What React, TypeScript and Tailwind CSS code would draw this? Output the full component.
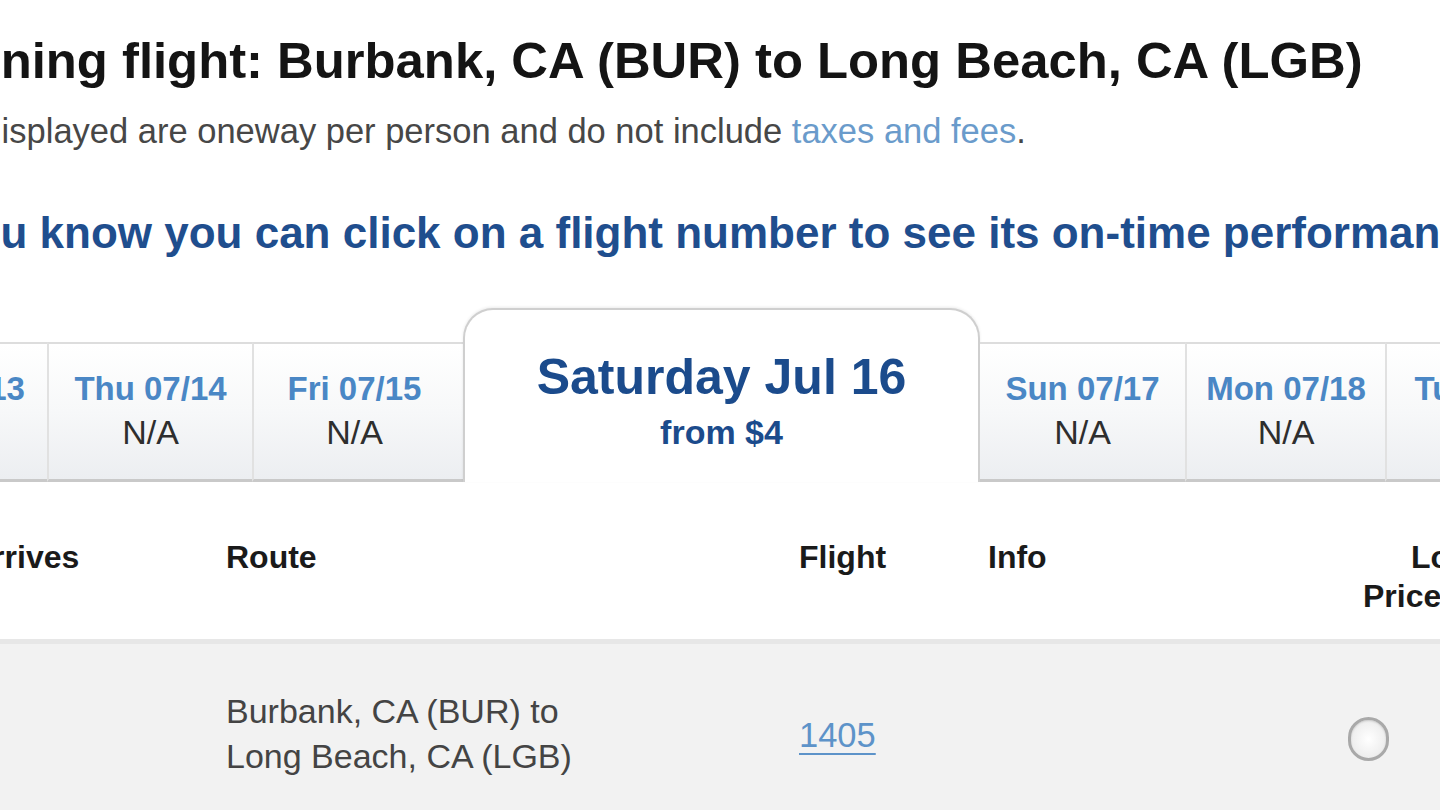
import React from "react";

type Tab = { day: string; w: string; pad?: string };

const leftTabs: Tab[] = [
  { day: "Wed 07/13", w: "w-[205px]" },
  { day: "Thu 07/14", w: "w-[205px]" },
  { day: "Fri 07/15", w: "w-[211px]", pad: "pr-[8px]" },
];

const rightTabs: Tab[] = [
  { day: "Sun 07/17", w: "w-[205px]" },
  { day: "Mon 07/18", w: "w-[200px]" },
  { day: "Tue 07/19", w: "w-[205px]" },
];

function DateTab({ tab, first }: { tab: Tab; first?: boolean }) {
  return (
    <div
      className={`${tab.w} ${tab.pad ?? ""} shrink-0 h-[140px] flex flex-col items-center pt-[25px] bg-linear-to-b from-white via-[#f7f8f9] to-[#eceef1] border-t-2 border-t-[#dddddd] border-b-[3px] border-b-[#c9c9c9] ${
        first ? "" : "border-l-2 border-l-[#e1e1e1]"
      }`}
    >
      <div className="text-[33px] leading-[40px] font-bold text-[#4a87c5] whitespace-nowrap">
        {tab.day}
      </div>
      <div className="mt-[3px] text-[34px] leading-[40px] text-[#2e2e2e] whitespace-nowrap">
        N/A
      </div>
    </div>
  );
}

export default function App() {
  return (
    <div className="w-[1440px] h-[810px] overflow-hidden bg-white font-['Liberation_Sans',Arial,sans-serif]">
      <h1 className="ml-[-132px] pt-[31px] whitespace-nowrap text-[50.8px] leading-[60px] font-bold text-[#141414]">
        Returning flight: Burbank, CA (BUR) to Long Beach, CA (LGB)
      </h1>

      <p className="ml-[-123px] mt-[20px] whitespace-nowrap text-[34.5px] leading-[40px] text-[#474747]">
        Prices displayed are oneway per person and do not include{" "}
        <a className="text-[#6a9bcb]">taxes and fees</a>.
      </p>

      <p className="ml-[-134px] mt-[57px] whitespace-nowrap text-[44px] leading-[50px] font-bold text-[#1f4e8e]">
        Did you know you can click on a flight number to see its on-time performance?
      </p>

      {/* Date tabs */}
      <div className="mt-[50px] ml-[-158px] flex items-end h-[174px]">
        {leftTabs.map((t, i) => (
          <DateTab key={t.day} tab={t} first={i === 0} />
        ))}
        <div className="w-[517px] shrink-0 h-[174px] bg-white border-2 border-b-0 border-[#cfcfcf] rounded-t-[30px] shadow-[0_-1px_3px_rgba(0,0,0,0.08)] flex flex-col items-center pt-[39px]">
          <div className="text-[50px] leading-[56px] font-bold text-[#1b4b8c] whitespace-nowrap">
            Saturday Jul 16
          </div>
          <div className="mt-[7px] text-[34px] leading-[40px] font-bold text-[#1b4b8c] whitespace-nowrap">
            from $4
          </div>
        </div>
        {rightTabs.map((t, i) => (
          <DateTab key={t.day} tab={t} first={i === 0} />
        ))}
      </div>

      {/* Table header */}
      <div className="ml-[-31px] flex h-[157px] pt-[56px] text-[32px] leading-[39px] font-bold text-[#1a1a1a]">
        <div className="w-[257px] shrink-0 whitespace-nowrap">Arrives</div>
        <div className="w-[573px] shrink-0 whitespace-nowrap">Route</div>
        <div className="w-[189px] shrink-0 whitespace-nowrap">Flight</div>
        <div className="w-[325px] shrink-0 whitespace-nowrap">Info</div>
        <div className="w-[240px] shrink-0 pl-[50px] whitespace-nowrap">
          <div className="pl-[48px]">Lowest</div>
          <div>Price</div>
        </div>
      </div>

      {/* Flight row */}
      <div className="ml-[-31px] flex h-[200px] bg-[#f2f2f2] border-t-[5px] border-t-[#e7e7e7]">
        <div className="w-[257px] shrink-0" />
        <div className="w-[573px] shrink-0 pt-[45px] text-[34px] leading-[45px] text-[#444444] whitespace-nowrap">
          <div>Burbank, CA (BUR) to</div>
          <div>Long Beach, CA (LGB)</div>
        </div>
        <div className="w-[189px] shrink-0 pt-[69px] text-[34.5px] leading-[45px]">
          <a className="text-[#5d93c9] underline decoration-2 underline-offset-[6px]">1405</a>
        </div>
        <div className="w-[325px] shrink-0" />
        <div className="w-[240px] shrink-0 pl-[35px] pt-[73px]">
          <div className="w-[41px] h-[44px] rounded-full border-[3px] border-[#a9a9a9] bg-radial from-white to-[#e6e6e6] shadow-[inset_0_1px_2px_rgba(0,0,0,0.15)]" />
        </div>
      </div>
    </div>
  );
}
